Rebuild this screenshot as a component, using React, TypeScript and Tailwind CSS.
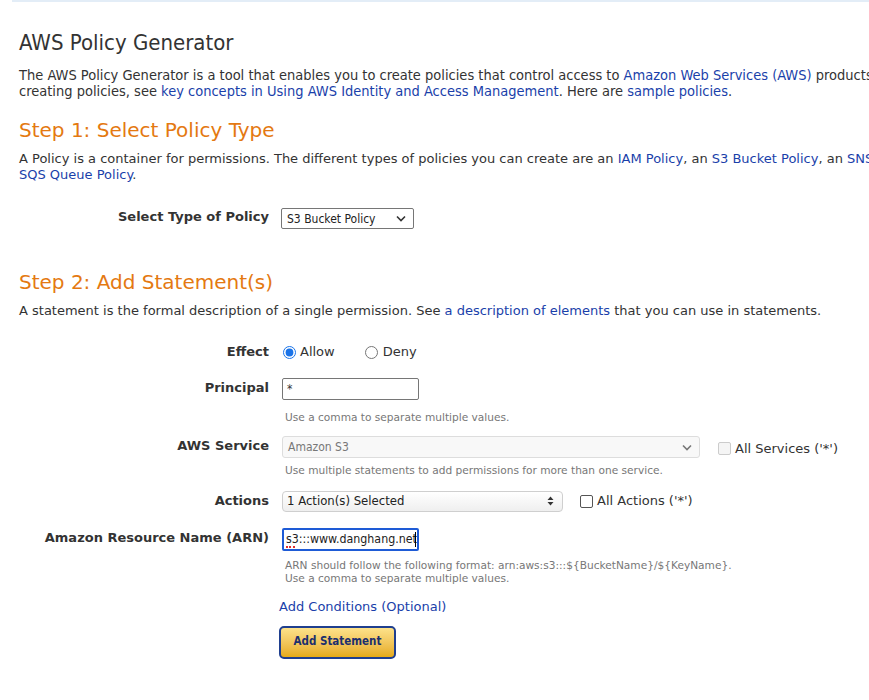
import React from 'react';

const V = "font-['Verdana','DejaVu_Sans',sans-serif]";
const N = "font-['DejaVu_Sans_Condensed','Liberation_Sans_Narrow','Liberation_Sans',sans-serif]";
const link = 'text-[#1a3faa]';

function Row({ label, children, className = '' }: { label: string; children: React.ReactNode; className?: string }) {
  return (
    <div className={`grid grid-cols-[263px_1fr] ${className}`}>
      <div className="pr-[13px] text-right text-[13px] font-bold leading-[20px] text-[#333]">{label}</div>
      <div>{children}</div>
    </div>
  );
}

function Chevron({ color = '#333' }: { color?: string }) {
  return (
    <svg width="10" height="7" viewBox="0 0 10 7" fill="none">
      <path d="M1 1.5 5 5.5 9 1.5" stroke={color} strokeWidth="1.6" />
    </svg>
  );
}

function Help({ children, className = 'mt-[5px]' }: { children: React.ReactNode; className?: string }) {
  return <div className={`${className} pl-[3px] text-[10.6px] leading-[13px] text-[#777]`}>{children}</div>;
}

export default function App() {
  return (
    <div className={`w-[869px] h-[700px] overflow-hidden bg-white text-[#333] ${V}`}>
      <div className="ml-[12px] h-[2px] bg-[#e3edf7]" />
      <div className="w-[1100px] pl-[19px]">
        <h1 className={`mt-[29px] text-[22px] leading-[24px] text-[#333] ${N}`}>AWS Policy Generator</h1>
        <p className={`mt-[12px] text-[14.5px] leading-[16px] whitespace-nowrap ${N}`}>
          The AWS Policy Generator is a tool that enables you to create policies that control access to <span className={link}>Amazon Web Services (AWS)</span> products and resources. For more information about
          <br />
          creating policies, see <span className={link}>key concepts in Using AWS Identity and Access Management</span>. Here are <span className={link}>sample policies</span>.
        </p>

        <h2 className="mt-[19px] text-[20px] leading-[24px] text-[#e47911]">Step 1: Select Policy Type</h2>
        <p className="mt-[9px] text-[13px] leading-[16px] whitespace-nowrap">
          A Policy is a container for permissions. The different types of policies you can create are an <span className={link}>IAM Policy</span>, an <span className={link}>S3 Bucket Policy</span>, an <span className={link}>SNS Topic Policy</span>, a <span className={link}>VPC Endpoint Policy</span>, and an
          <br />
          <span className={link}>SQS Queue Policy</span>.
        </p>
      </div>

      <div className="pl-[19px]">
        <Row label="Select Type of Policy" className="mt-[24px]">
          <div className={`ml-[-1px] mt-[1px] flex h-[21px] w-[133px] items-center justify-between rounded-[2px] border border-[#767676] bg-white pl-[5px] pr-[7px] text-[12px] text-[#222] ${N}`}>
            <span>S3 Bucket Policy</span>
            <Chevron />
          </div>
        </Row>

        <h2 className="mt-[41px] text-[20px] leading-[24px] text-[#e47911]">Step 2: Add Statement(s)</h2>
        <p className="mt-[9px] text-[13px] leading-[16px] whitespace-nowrap">
          A statement is the formal description of a single permission. See <span className={link}>a description of elements</span> that you can use in statements.
        </p>

        <Row label="Effect" className="mt-[23px]">
          <div className="flex h-[20px] items-center text-[13px]">
            <input type="radio" name="effect" defaultChecked className="m-0 ml-[1px] h-[13px] w-[13px] accent-[#1a73e8]" />
            <span className="ml-[4px]">Allow</span>
            <input type="radio" name="effect" className="m-0 ml-[30px] h-[13px] w-[13px]" />
            <span className="ml-[5px]">Deny</span>
          </div>
        </Row>

        <Row label="Principal" className="mt-[16px]">
          <div className={`h-[22px] w-[137px] rounded-[2px] border border-[#767676] pl-[4px] text-[12px] leading-[20px] ${N}`}>*</div>
          <Help className="mt-[11px]">Use a comma to separate multiple values.</Help>
        </Row>

        <Row label="AWS Service" className="mt-[12px]">
          <div className="flex items-center">
            <div className={`flex h-[22px] w-[418px] items-center justify-between rounded-[3px] border border-[#ddd] bg-[#f8f8f8] pl-[5px] pr-[7px] text-[12px] text-[#777] ${N}`}>
              <span>Amazon S3</span>
              <Chevron color="#777" />
            </div>
            <div className="ml-[18px] mt-[3px] h-[13px] w-[13px] rounded-[2px] border border-[#ccc] bg-[#f5f5f5]" />
            <span className="ml-[4px] mt-[3px] text-[13px]">All Services ('*')</span>
          </div>
          <Help>Use multiple statements to add permissions for more than one service.</Help>
        </Row>

        <Row label="Actions" className="mt-[14px]">
          <div className="flex items-center">
            <div className={`flex h-[21px] w-[281px] items-center justify-between rounded-[4px] border border-[#cfcfcf] bg-gradient-to-b from-white to-[#efefef] pl-[4px] pr-[8px] text-[13px] text-[#222] ${N}`}>
              <span>1 Action(s) Selected</span>
              <svg width="7" height="10" viewBox="0 0 7 10"><path d="M3.5 0.5 6.5 4H0.5Z M3.5 9.5 6.5 6H0.5Z" fill="#333" /></svg>
            </div>
            <div className="ml-[17px] h-[13px] w-[13px] rounded-[2px] border border-[#555] bg-white" />
            <span className="ml-[4px] text-[13px]">All Actions ('*')</span>
          </div>
        </Row>

        <Row label="Amazon Resource Name (ARN)" className="mt-[16px]">
          <div className={`relative h-[23px] w-[137px] overflow-hidden rounded-[2px] border-2 border-[#1e5bd6] pl-[2px] text-[12.3px] leading-[19px] text-[#222] ${N}`}>
            <span className="whitespace-nowrap">s3:::www.danghang.net</span>
            <span className="absolute right-[1px] top-[2px] h-[15px] w-[1px] bg-black" />
            <span className="absolute left-[2px] bottom-[1px] h-[2px] w-[9px] border-b-2 border-dotted border-[#e03030]" />
          </div>
          <Help className="mt-[8px]">
            ARN should follow the following format: arn:aws:s3:::${'{'}BucketName{'}'}/${'{'}KeyName{'}'}.
            <br />
            Use a comma to separate multiple values.
          </Help>
          <div className={`ml-[-3px] mt-[14px] text-[13px] leading-[16px] ${link}`}>Add Conditions (Optional)</div>
          <button className={`ml-[-3px] mt-[11px] h-[33px] w-[117px] rounded-[5px] border-2 border-[#1f3f8f] bg-gradient-to-b from-[#fde28a] to-[#e6ab12] text-[11.5px] font-bold text-[#1c2f6e] ${N}`}>
            Add Statement
          </button>
        </Row>
      </div>
    </div>
  );
}
